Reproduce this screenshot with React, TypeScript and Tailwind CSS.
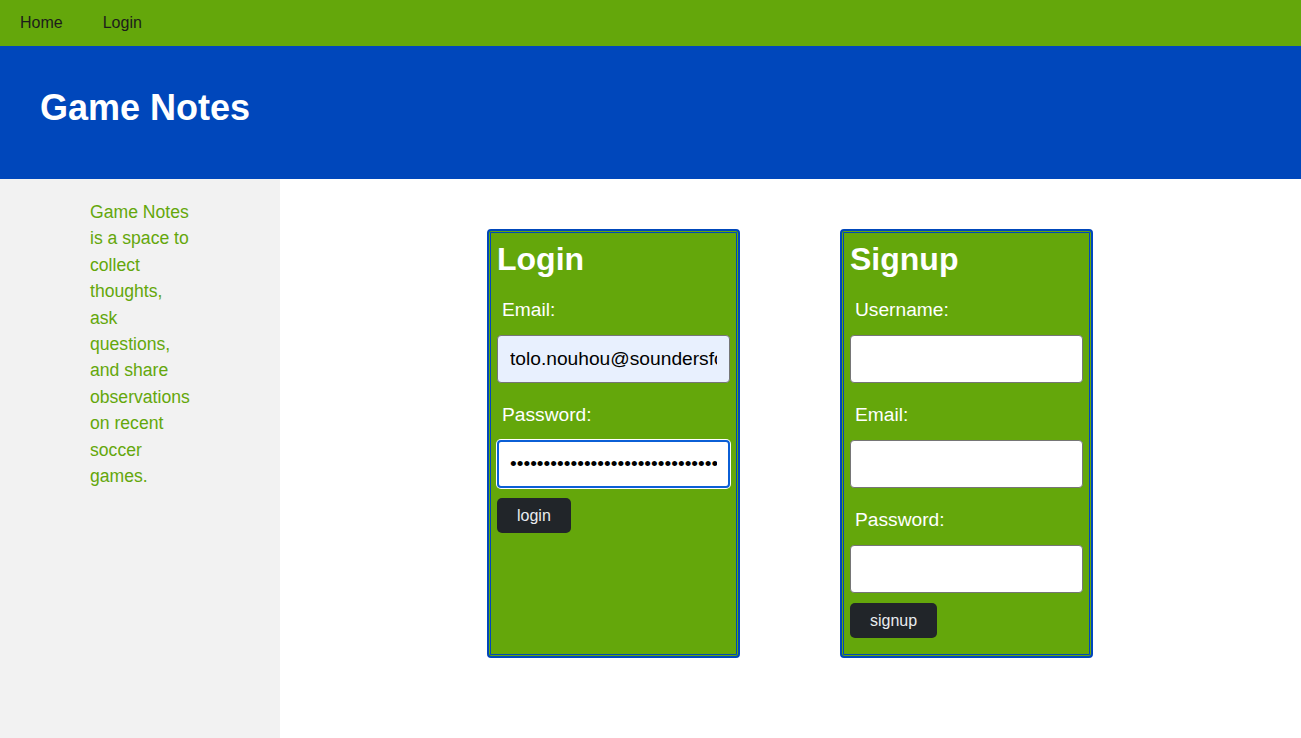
import React from "react";

const font = { fontFamily: '"Liberation Sans", Arial, Helvetica, sans-serif' };

function Field({ label, value, type, variant }: { label: string; value?: string; type?: string; variant?: "autofill" | "focus" | "plain" }) {
  const base =
    "block w-full h-[48px] rounded-[4px] px-3 text-[19.2px] text-black outline-none";
  const cls =
    variant === "autofill"
      ? `${base} border border-[#767676] bg-[#e8f0fe]`
      : variant === "focus"
      ? `${base} border-2 border-[#0b5fd6] bg-white shadow-[0_0_0_1px_#ffffff] px-[11px]`
      : `${base} border border-[#767676] bg-white`;
  return (
    <div>
      <label className="block mt-[21px] mb-[14px] leading-[22px] pl-[5px] text-[19.2px] text-white">{label}</label>
      <input className={cls} type={type ?? "text"} defaultValue={value} readOnly style={font} />
    </div>
  );
}

function Card({ title, children, button }: { title: string; children: React.ReactNode; button: string }) {
  return (
    <div className="w-[253px] h-[429px] rounded-[4px] border-2 border-[#0047bb] bg-[#64a70b] shadow-[inset_0_0_0_1px_#64a70b,inset_0_0_0_2px_#0047bb] px-[8px] pt-[10px]">
      <h2 className="text-[32px] font-bold leading-[37px] text-white">{title}</h2>
      {children}
      <button className="mt-[10px] h-[35px] rounded-[5px] bg-[#212529] px-5 text-[16px] text-[#e9ecef]">{button}</button>
    </div>
  );
}

export default function App() {
  return (
    <div className="min-h-screen flex flex-col bg-white" style={font}>
      <nav className="h-[46px] bg-[#64a70b] flex items-center text-[16px] text-[#1c1c1c]">
        <a className="px-5">Home</a>
        <a className="px-5">Login</a>
      </nav>
      <header className="h-[133px] bg-[#0047bb] pl-10 pt-[41px]">
        <h1 className="text-[36px] font-bold leading-[41px] text-white">Game Notes</h1>
      </header>
      <div className="flex flex-1">
        <aside className="w-[280px] shrink-0 bg-[#f2f2f2] pt-[20px]">
          <p className="ml-[90px] w-[102px] text-[17.6px] leading-[26.4px] text-[#64a70b]">
            Game Notes is a space to collect thoughts, ask questions, and share observations on recent soccer games.
          </p>
        </aside>
        <main className="flex-1 flex justify-center items-start gap-[100px] pt-[50px] pr-[1px]">
          <Card title="Login" button="login">
            <Field label="Email:" value="tolo.nouhou@soundersfc.com" variant="autofill" />
            <Field label="Password:" value="passwordpasswordpasswordpassword" type="password" variant="focus" />
          </Card>
          <Card title="Signup" button="signup">
            <Field label="Username:" variant="plain" />
            <Field label="Email:" variant="plain" />
            <Field label="Password:" type="password" variant="plain" />
          </Card>
        </main>
      </div>
    </div>
  );
}
